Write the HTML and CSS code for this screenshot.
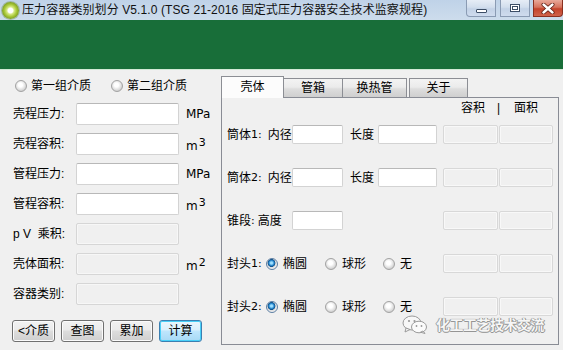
FILE: index.html
```html
<!DOCTYPE html>
<html lang="zh-CN">
<head>
<meta charset="utf-8">
<title>压力容器类别划分</title>
<link rel="stylesheet" href="styles.css">
</head>
<body>
<div class="titlebar">
  <span class="app-icon"></span>
  <span class="title">压力容器类别划分 V5.1.0 (TSG 21-2016 固定式压力容器安全技术监察规程)</span>
  <div class="winbtns">
    <span class="wb min"><i></i></span>
    <span class="wb max"><i></i></span>
    <span class="wb close">
      <svg width="14" height="11" viewBox="0 0 14 11"><path d="M2.5 1.5 L11.5 9.5 M11.5 1.5 L2.5 9.5" stroke="#5a1a10" stroke-width="4" stroke-linecap="round"/><path d="M2.5 1.5 L11.5 9.5 M11.5 1.5 L2.5 9.5" stroke="#fff" stroke-width="2.4" stroke-linecap="round"/></svg>
    </span>
  </div>
</div>
<div class="banner"></div>
<div class="main">
  <div class="left">
    <div class="media">
      <label class="ropt first"><span class="radio"></span>第一组介质</label>
      <label class="ropt"><span class="radio"></span>第二组介质</label>
    </div>
    <div class="form">
      <span class="lbl">壳程压力:</span><span class="tb"></span><span class="unit">MPa</span>
      <span class="lbl">壳程容积:</span><span class="tb"></span><span class="unit m">m<sup>3</sup></span>
      <span class="lbl">管程压力:</span><span class="tb"></span><span class="unit">MPa</span>
      <span class="lbl">管程容积:</span><span class="tb"></span><span class="unit m">m<sup>3</sup></span>
      <span class="lbl">p V &nbsp;乘积:</span><span class="tb dis"></span><span class="unit"></span>
      <span class="lbl">壳体面积:</span><span class="tb dis"></span><span class="unit m">m<sup>2</sup></span>
      <span class="lbl">容器类别:</span><span class="tb dis"></span><span class="unit"></span>
    </div>
    <div class="buttons">
      <span class="btn">&lt;介质</span>
      <span class="btn">查图</span>
      <span class="btn">累加</span>
      <span class="btn def">计算</span>
    </div>
  </div>
  <div class="tabs">
    <div class="strip">
      <span class="tab active t1">壳体</span>
      <span class="tab t2">管箱</span>
      <span class="tab t3">换热管</span>
      <span class="tab t4">关于</span>
    </div>
    <div class="panel">
      <div class="head">
        <span class="hc">容积</span><span class="hsep">|</span><span class="hc">面积</span>
      </div>
      <div class="row">
        <span class="rl w65">筒体<span class="num">1:</span><span class="sp">内径</span></span>
        <span class="tb s51"></span>
        <span class="rl2">长度</span>
        <span class="tb s59"></span>
        <span class="fill"></span>
        <span class="cell c55"></span><span class="cell c54"></span>
      </div>
      <div class="row">
        <span class="rl w65">筒体<span class="num">2:</span><span class="sp">内径</span></span>
        <span class="tb s51"></span>
        <span class="rl2">长度</span>
        <span class="tb s59"></span>
        <span class="fill"></span>
        <span class="cell c55"></span><span class="cell c54"></span>
      </div>
      <div class="row">
        <span class="rl w65">锥段<span class="num">:</span><span class="sp2">高度</span></span>
        <span class="tb s51"></span>
        <span class="fill"></span>
        <span class="cell c55"></span><span class="cell c54"></span>
      </div>
      <div class="row">
        <span class="rl w39">封头<span class="num">1:</span></span>
        <label class="ropt r1"><span class="radio on"></span>椭圆</label>
        <label class="ropt r2"><span class="radio"></span>球形</label>
        <label class="ropt r3"><span class="radio"></span>无</label>
        <span class="fill"></span>
        <span class="cell c55"></span><span class="cell c54"></span>
      </div>
      <div class="row">
        <span class="rl w39">封头<span class="num">2:</span></span>
        <label class="ropt r1"><span class="radio on"></span>椭圆</label>
        <label class="ropt r2"><span class="radio"></span>球形</label>
        <label class="ropt r3"><span class="radio"></span>无</label>
        <span class="fill"></span>
        <span class="cell c55"></span><span class="cell c54"></span>
      </div>
    </div>
  </div>
</div>
<div class="watermark">
  <svg width="26" height="19" viewBox="0 0 26 19">
    <ellipse cx="10" cy="8" rx="9" ry="7" fill="#f7f7f7" stroke="#9a9a9a" stroke-width="1"/>
    <path d="M4 13 L3 17 L8 14.5 Z" fill="#f7f7f7" stroke="#9a9a9a" stroke-width="1"/>
    <ellipse cx="17" cy="12" rx="7.5" ry="5.8" fill="#fbfbfb" stroke="#9a9a9a" stroke-width="1"/>
    <path d="M21 16 L23 18.5 L18.5 17.2 Z" fill="#fbfbfb" stroke="#9a9a9a" stroke-width="1"/>
    <circle cx="7" cy="6" r="1.1" fill="#999"/><circle cx="12.5" cy="6" r="1.1" fill="#999"/>
    <circle cx="14.5" cy="11" r="0.9" fill="#999"/><circle cx="19.5" cy="11" r="0.9" fill="#999"/>
  </svg>
  <span class="wmtext">化工工艺技术交流</span>
</div>
</body>
</html>
```

FILE: styles.css
```css
* { box-sizing: border-box; margin: 0; padding: 0; }
html, body { width: 563px; height: 350px; overflow: hidden; }
body {
  background: #f0f0f0;
  font-family: "Liberation Sans", "Noto Sans CJK SC", sans-serif;
  font-size: 12px;
  line-height: 14px;
  color: #000;
  position: relative;
}

/* title bar */
.titlebar {
  height: 20px;
  display: flex;
  align-items: center;
  background: linear-gradient(#bfd2e8, #cddcec);
}
.app-icon {
  width: 17px; height: 17px;
  margin-left: 2px;
  border-radius: 50%;
  background: radial-gradient(circle at 50% 50%, #ffffff 0 2.5px, #d9ea8a 3.5px, #a9c93a 6px, #7f9f22 8.5px);
  box-shadow: 0 0 0 1px rgba(90,120,40,0.35);
}
.title { margin-left: 3px; font-size: 12px; letter-spacing: 0.1px; color: #111; white-space: nowrap; }
.winbtns { margin-left: auto; display: flex; align-self: flex-start; height: 17px; }
.wb {
  width: 30px; height: 17px;
  display: flex; align-items: center; justify-content: center;
  border: 1px solid #8a9bb3;
  border-top: none;
  background: linear-gradient(#e6edf6, #d2deed 45%, #c3d2e6 55%, #cfdcee);
}
.wb.min { border-radius: 0 0 0 4px; }
.wb.max { margin-left: 4px; border-radius: 0; }
.wb.close {
  margin-left: 3px;
  border-color: #8a3020;
  border-radius: 0 0 4px 0;
  background: linear-gradient(#e9a99a, #d6735e 45%, #c4432b 55%, #d0634b);
}
.wb.min i {
  width: 11px; height: 4px; margin-top: 5px;
  background: #fff; border: 1px solid #3c4e66; border-radius: 1px;
}
.wb.max i {
  width: 10px; height: 8px;
  border: 1px solid #3c4e66; background: #fff;
  box-shadow: inset 0 0 0 1px #fff, inset 0 0 0 2px #3c4e66;
}

/* banner */
.banner { height: 50px; background: #186e39; border-bottom: 1px solid #d2ead6; }

/* main */
.main { display: flex; height: 280px; }
.left { width: 221px; padding: 9px 0 0 13px; }

.media { display: flex; height: 14px; align-items: center; margin-left: 2px; }
.ropt { display: flex; align-items: center; white-space: nowrap; }
.media .ropt.first { width: 96px; }
.radio {
  width: 12px; height: 12px; border-radius: 50%;
  border: 1px solid #a2a2a2;
  background: radial-gradient(circle at 45% 40%, #ffffff 0 2px, #e8e8e8 4px, #cfcfcf 6px);
  margin-right: 4px;
  flex: none;
}
.radio.on {
  border-color: #5d7fa3;
  background: radial-gradient(circle at 45% 40%, #9fe0ff 0 1px, #2a8ad0 2.5px, #0d4f88 3.6px, #dcdcdc 4.2px, #f2f2f2 6px);
}

.form {
  margin-top: 10px;
  display: grid;
  grid-template-columns: 63px 103px auto;
  grid-auto-rows: 22px;
  row-gap: 8px;
  align-items: center;
}
.lbl { white-space: nowrap; }
.tb {
  height: 22px;
  background: #fff;
  border: 1px solid #d3d3d3;
  border-top-color: #b8b8b8;
  border-radius: 2px;
}
.tb.dis {
  background: #f0f0f0;
  border-color: #d6d6d6;
  box-shadow: inset 0 0 0 1px #f7f7f7;
}
.unit { padding-left: 7px; font-family: "DejaVu Sans", "Liberation Sans", sans-serif; font-size: 12px; }
.unit.m { padding-top: 4px; }
.unit sup { font-size: 11px; vertical-align: 4px; line-height: 0; margin-left: 1px; }

.buttons { display: flex; gap: 6px; margin: 15px 0 0 -1px; }
.btn {
  width: 43px; height: 22px;
  display: flex; align-items: center; justify-content: center;
  border: 1px solid #707070;
  border-radius: 3px;
  background: linear-gradient(#f2f2f2, #ebebeb 45%, #dddddd 50%, #cfcfcf);
  box-shadow: inset 0 0 0 1px #fbfbfb;
  font-size: 12px;
}
.btn.def {
  border-color: #3c7fb1;
  background: linear-gradient(#eaf6fd, #d9f0fc 45%, #bee6fd 50%, #a7d9f5);
  box-shadow: inset 0 0 0 1px #48d0f8;
}

/* tabs */
.tabs { width: 338px; margin-top: 6px; display: flex; flex-direction: column; }
.strip { display: flex; align-items: flex-end; height: 21px; }
.tab {
  height: 19px;
  display: flex; align-items: center; justify-content: center;
  border: 1px solid #8c8e94;
  border-bottom: none;
  margin-left: -1px;
  background: linear-gradient(#f3f3f3, #ebebeb 45%, #dddddd 55%, #cfcfcf);
  font-size: 12px;
}
.tab.active {
  margin-left: 0;
  height: 22px;
  margin-bottom: -1px;
  position: relative;
  z-index: 1;
  background: #fcfcfc;
  padding-bottom: 2px;
}
.t1 { width: 63px; }
.t2 { width: 60px; }
.t3 { width: 65px; }
.t4 { width: 59px; margin-left: 2px; }

.panel {
  height: 248px;
  border: 1px solid #898c95;
  padding: 3px 5px 0 5px;
  display: flex; flex-direction: column;
}
.head { display: flex; justify-content: flex-end; height: 14px; align-items: center; }
.hc { width: 54px; text-align: center; }
.hsep { width: 1px; display: flex; justify-content: center; }
.head .hc:first-child { padding-left: 4px; }

.row { display: flex; align-items: center; height: 19px; margin-top: 24px; white-space: nowrap; }
.head + .row { margin-top: 10px; }
.rl { display: flex; align-items: center; }
.w65 { width: 65px; }
.w39 { width: 39px; }
.num { font-family: "DejaVu Sans", sans-serif; font-size: 11px; }
.sp { margin-left: 6px; }
.sp2 { margin-left: 3px; }
.rl2 { width: 35px; padding-left: 7px; }
.row .tb { height: 19px; }
.s51 { width: 51px; }
.s59 { width: 59px; }
.fill { flex: 1; }
.cell {
  height: 19px;
  border: 1px solid #d8d8d8;
  border-radius: 2px;
  background: #f0f0f0;
  box-shadow: inset 0 0 0 1px #f8f8f8;
}
.c55 { width: 55px; }
.c54 { width: 54px; margin-left: 1px; }
.r1 { width: 59px; }
.r2 { width: 58px; }
.r1 .radio, .r2 .radio, .r3 .radio { margin-right: 5px; }

/* watermark overlay */
.watermark {
  position: absolute;
  left: 402px; top: 315px;
  display: flex; align-items: center; gap: 8px;
}
.wmtext {
  font-size: 14px;
  font-weight: bold;
  color: #f6f6f6;
  letter-spacing: -0.5px;
  text-shadow: 0 0 1px #6d6d6d, 1px 0 0 #9a9a9a, -1px 0 0 #b0b0b0, 0 1px 0 #9a9a9a;
}
```
